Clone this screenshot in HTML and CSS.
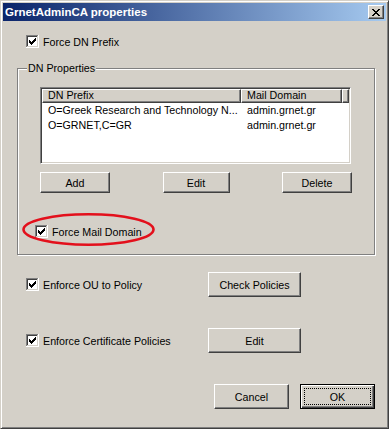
FILE: index.html
```html
<!DOCTYPE html>
<html lang="en">
<head>
  <meta charset="UTF-8">
  <meta name="viewport" content="width=device-width, initial-scale=1.0">
  <title>GrnetAdminCA properties</title>
  <link rel="stylesheet" href="styles.css">
</head>
<body>

  <svg class="defs" width="0" height="0" aria-hidden="true">
    <symbol id="checkbox" viewBox="0 0 13 13">
      <path fill="#808080" d="M0 0h12v1H1v11H0z"/>
      <path fill="#fff" d="M12 0h1v13H0v-1h12z"/>
      <path fill="#404040" d="M1 1h10v1H2v9H1z"/>
      <path fill="#d4d0c8" d="M11 1h1v11H1v-1h10z"/>
      <rect x="2" y="2" width="9" height="9" fill="#fff"/>
      <path fill="#000" d="M3 5h1v3H3zM4 6h1v3H4zM5 7h1v3H5zM6 6h1v3H6zM7 5h1v3H7zM8 4h1v3H8zM9 3h1v3H9z"/>
    </symbol>
  </svg>

  <div class="window">
    <div class="titlebar">
      <span class="title">GrnetAdminCA properties</span>
      <button class="close" aria-label="Close">
        <svg width="8" height="7" viewBox="0 0 8 7">
          <path fill="#000" d="M0 0h2v1H0zM6 0h2v1H6zM1 1h2v1H1zM5 1h2v1H5zM2 2h4v1H2zM3 3h2v1H3zM2 4h4v1H2zM1 5h2v1H1zM5 5h2v1H5zM0 6h2v1H0zM6 6h2v1H6z"/>
        </svg>
      </button>
    </div>

    <div class="client">
      <label class="check-row top-check">
        <svg class="cb"><use href="#checkbox"/></svg>
        Force DN Prefix
      </label>

      <div class="group">
        <div class="group-label">DN Properties</div>

        <div class="listview">
          <div class="lv-head">
            <span class="col col-prefix">DN Prefix</span>
            <span class="col col-mail">Mail Domain</span>
            <span class="col col-rest"></span>
          </div>
          <div class="lv-row">
            <span class="cell cell-prefix">O=Greek Research and Technology N...</span>
            <span class="cell cell-mail">admin.grnet.gr</span>
          </div>
          <div class="lv-row">
            <span class="cell cell-prefix">O=GRNET,C=GR</span>
            <span class="cell cell-mail">admin.grnet.gr</span>
          </div>
        </div>

        <div class="list-actions">
          <button class="btn btn-list">Add</button>
          <button class="btn btn-list narrow">Edit</button>
          <button class="btn btn-list">Delete</button>
        </div>

        <label class="check-row mail-check">
          <svg class="cb"><use href="#checkbox"/></svg>
          Force Mail Domain
        </label>

        <!-- red marker drawn over the screenshot -->
        <svg class="highlight" width="133" height="33" viewBox="0 0 133 33">
          <ellipse cx="66.5" cy="16.5" rx="65" ry="15.2" fill="none" stroke="#e3101c" stroke-width="2.6"/>
        </svg>
      </div>

      <div class="option-row first">
        <label class="check-row">
          <svg class="cb"><use href="#checkbox"/></svg>
          Enforce OU to Policy
        </label>
        <button class="btn btn-wide">Check Policies</button>
      </div>

      <div class="option-row second">
        <label class="check-row">
          <svg class="cb"><use href="#checkbox"/></svg>
          Enforce Certificate Policies
        </label>
        <button class="btn btn-wide">Edit</button>
      </div>

      <div class="dialog-actions">
        <button class="btn btn-dialog">Cancel</button>
        <button class="btn btn-dialog default">OK</button>
      </div>
    </div>
  </div>

</body>
</html>
```

FILE: styles.css
```css
* {
  box-sizing: border-box;
}
body {
  margin: 0;
  background: #d4d0c8;
  font-family: 'Liberation Sans', Arial, sans-serif;
  font-size: 10.7px;
  color: #000;
}
.defs {
  display: block;
  width: 0;
  height: 0;
  overflow: hidden;
}
.window {
  width: 389px;
  height: 429px;
  background: #d4d0c8;
  border: 1px solid;
  border-color: #d4d0c8 #404040 #404040 #d4d0c8;
  box-shadow: inset 1px 1px #fff, inset -1px -1px #808080;
  padding: 2px;
}
.titlebar {
  height: 18px;
  display: flex;
  align-items: center;
  justify-content: space-between;
  padding: 0 2px 0 2px;
  background: linear-gradient(to right, #0a246a, #a6caf0);
}
.title {
  color: #fff;
  font-weight: bold;
  font-size: 11.5px;
}
.close {
  width: 16px;
  height: 14px;
  padding: 0;
  display: flex;
  align-items: center;
  justify-content: center;
  background: #d4d0c8;
  border: 1px solid;
  border-color: #fff #404040 #404040 #fff;
  box-shadow: inset -1px -1px #808080;
}
.close svg {
  display: block;
}
.client {
  padding-top: 14px;
}
.check-row {
  display: flex;
  align-items: center;
  gap: 4px;
  width: fit-content;
  height: 13px;
  white-space: nowrap;
}
.cb {
  width: 13px;
  height: 13px;
  flex: none;
}
.top-check {
  margin-left: 23px;
}

/* DN Properties group box */
.group {
  position: relative;
  margin: 20px 0 0 14px;
  width: 358px;
  height: 187px;
  border: 1px solid #808080;
  box-shadow: 1px 1px #fff, inset 1px 1px #fff;
}
.group-label {
  width: fit-content;
  margin: -7px 0 0 9px;
  padding: 0 1px;
  background: #d4d0c8;
  line-height: 13px;
}
.listview {
  margin: 12px 0 0 22px;
  width: 311px;
  height: 77px;
  padding: 1px;
  background: #fff;
  border: 1px solid;
  border-color: #808080 #fff #fff #808080;
  box-shadow: inset 1px 1px #404040, inset -1px -1px #d4d0c8;
}
.lv-head {
  display: flex;
  height: 14px;
}
.col {
  background: #d4d0c8;
  border: 1px solid;
  border-color: #fff #404040 #404040 #fff;
  box-shadow: inset -1px -1px #808080;
  padding-left: 5px;
  line-height: 11px;
  white-space: nowrap;
  overflow: hidden;
}
.col-prefix {
  width: 199px;
}
.col-mail {
  width: 101px;
}
.col-rest {
  flex: 1;
}
.lv-row {
  display: flex;
  line-height: 15px;
}
.cell {
  padding-left: 6px;
  white-space: nowrap;
}
.cell-prefix {
  width: 199px;
}
.cell-mail {
  width: 101px;
}
.list-actions {
  display: flex;
  justify-content: space-between;
  margin: 8px 0 0 22px;
  width: 312px;
}
.mail-check {
  margin: 32px 0 0 17px;
}
.highlight {
  position: absolute;
  left: 4px;
  top: 144px;
  pointer-events: none;
}

/* buttons */
.btn {
  font: inherit;
  color: #000;
  padding: 0;
  background: #d4d0c8;
  border: 1px solid;
  border-color: #fff #404040 #404040 #fff;
  box-shadow: inset -1px -1px #808080;
}
.btn-list {
  width: 70px;
  height: 21px;
}
.btn-list.narrow {
  width: 67px;
}
.btn-wide {
  width: 93px;
  height: 25px;
}
.btn-dialog {
  width: 75px;
  height: 25px;
}
.btn.default {
  border: 1px solid #000;
  box-shadow: inset 1px 1px #fff, inset -1px -1px #404040, inset -2px -2px #808080;
  outline: 1px dotted #000;
  outline-offset: -5px;
}

/* lower options */
.option-row {
  display: grid;
  grid-template-columns: 182px 93px;
  align-items: center;
  height: 25px;
  padding-left: 23px;
}
.option-row.first {
  margin-top: 17px;
}
.option-row.second {
  margin-top: 31px;
}
.dialog-actions {
  display: flex;
  justify-content: flex-end;
  gap: 11px;
  margin-top: 31px;
  padding-right: 11px;
}
```
